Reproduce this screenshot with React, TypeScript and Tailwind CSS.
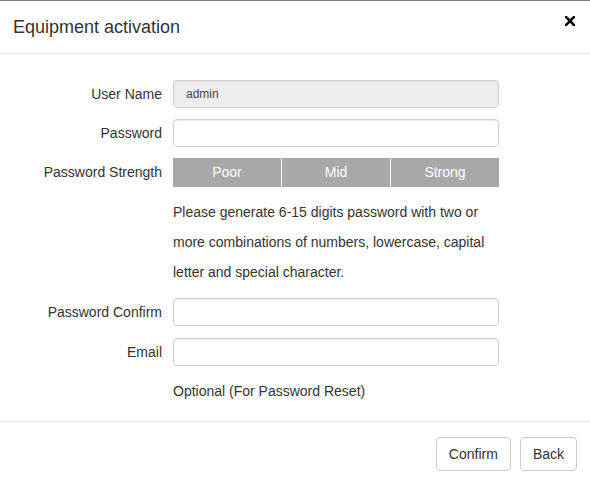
import React from "react";

const font = { fontFamily: '"Liberation Sans", Arial, sans-serif' };

function Row({ label, children }: { label?: string; children: React.ReactNode }) {
  return (
    <div className="flex items-center">
      <div className="w-[162px] text-right text-[14px] text-[#333]">{label}</div>
      <div className="ml-[11px] w-[326px]">{children}</div>
    </div>
  );
}

function Input({ value, disabled }: { value?: string; disabled?: boolean }) {
  return (
    <div
      className={`h-[28px] rounded-[4px] border border-[#cfcfcf] shadow-[inset_0_1px_1px_rgba(0,0,0,0.075)] flex items-center px-[12px] text-[12px] text-[#444] ${
        disabled ? "bg-[#eeeeee]" : "bg-white"
      }`}
    >
      {value}
    </div>
  );
}

export default function App() {
  return (
    <div style={font} className="w-[590px] h-[484px] bg-white flex flex-col border-t border-[#7d7d7d] overflow-hidden">
      <div className="h-[53px] border-b border-[#e5e5e5] flex items-center justify-between pl-[13px] pr-[14px] shrink-0">
        <div className="text-[18px] text-[#333]">Equipment activation</div>
        <svg width="10" height="10" viewBox="0 0 10 10" className="mt-[-12px] mr-[1px]">
          <path d="M1.2 1.2 L8.8 8.8 M8.8 1.2 L1.2 8.8" stroke="#000" strokeWidth="2.6" strokeLinecap="square" />
        </svg>
      </div>
      <div className="pt-[26px] flex flex-col h-[368px] border-b border-[#e5e5e5] shrink-0">
        <div className="flex flex-col gap-[11px]">
          <Row label="User Name">
            <Input value="admin" disabled />
          </Row>
          <Row label="Password">
            <Input />
          </Row>
          <Row label="Password Strength">
            <div className="h-[29px] flex gap-[1px] text-[14px] text-white">
              <div className="flex-1 bg-[#a8a8a8] flex items-center justify-center">Poor</div>
              <div className="flex-1 bg-[#a8a8a8] flex items-center justify-center">Mid</div>
              <div className="flex-1 bg-[#a8a8a8] flex items-center justify-center">Strong</div>
            </div>
          </Row>
        </div>
        <div className="mt-[10px] ml-[173px] w-[326px] text-[14px] leading-[30px] text-[#333]">
          Please generate 6-15 digits password with two or more combinations of numbers, lowercase, capital letter and special character.
        </div>
        <div className="mt-[11px] flex flex-col gap-[12px]">
          <Row label="Password Confirm">
            <Input />
          </Row>
          <Row label="Email">
            <Input />
          </Row>
        </div>
        <div className="mt-[10px] ml-[173px] text-[14px] leading-[30px] text-[#333]">Optional (For Password Reset)</div>
      </div>
      <div className="flex justify-end gap-[9px] pt-[15px] pr-[13px]">
        <button className="h-[34px] px-[12px] rounded-[4px] border border-[#ccc] bg-white text-[14px] text-[#333]">Confirm</button>
        <button className="h-[34px] px-[12px] rounded-[4px] border border-[#ccc] bg-white text-[14px] text-[#333]">Back</button>
      </div>
    </div>
  );
}
